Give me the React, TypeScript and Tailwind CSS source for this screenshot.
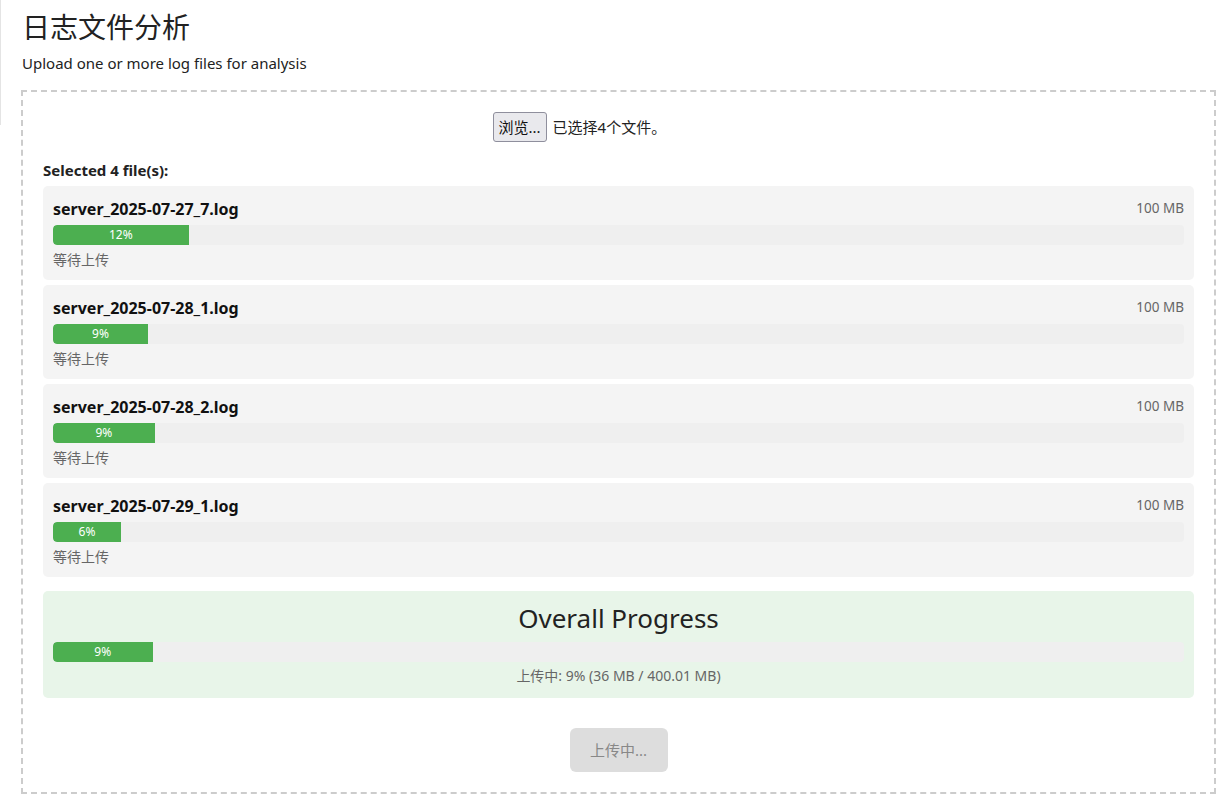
import React from 'react'

const files = [
  { name: 'server_2025-07-27_7.log', size: '100 MB', pct: 12, fill: 12 },
  { name: 'server_2025-07-28_1.log', size: '100 MB', pct: 9, fill: 8.4 },
  { name: 'server_2025-07-28_2.log', size: '100 MB', pct: 9, fill: 9 },
  { name: 'server_2025-07-29_1.log', size: '100 MB', pct: 6, fill: 6 },
]

function Bar({ pct, fill }: { pct: number; fill: number }) {
  return (
    <div className="h-5 w-full bg-[#efefef] rounded-[4px] overflow-hidden">
      <div
        className="h-full bg-[#4caf50] rounded-l-[4px] flex items-center justify-center text-[12px] text-white leading-none"
        style={{ width: `${fill}%` }}
      >
        {pct}%
      </div>
    </div>
  )
}

export default function App() {
  return (
    <main className="relative min-h-screen bg-white pl-[21px] pr-px pt-[10px] text-[#222] font-['Segoe_UI','Noto_Sans','Noto_Sans_CJK_SC',sans-serif]">
      <div className="absolute left-0 top-0 w-px h-[125px] bg-[#e4e4e4]" />
      <h1 className="text-[28px] leading-[34px] font-normal pl-px">日志文件分析</h1>
      <p className="mt-[9px] text-[15px] leading-5 pl-px">Upload one or more log files for analysis</p>

      <div className="mt-[17px] border-2 border-dashed border-[#ccc] p-5">
        {/* file picker */}
        <div className="flex justify-center">
          <div className="w-[252px] flex items-center gap-[6px] text-[15px]">
            <button className="h-[30px] px-[5px] bg-[#e9e9ed] border border-[#8f8f9d] rounded-[3px] text-[#111]">
              浏览...
            </button>
            <span>已选择4个文件。</span>
          </div>
        </div>

        <div className="mt-5 mb-2 text-[15px] leading-4 font-bold">Selected 4 file(s):</div>

        <div className="flex flex-col gap-[5px]">
          {files.map((f) => (
            <div key={f.name} className="bg-[#f4f4f4] rounded-[5px] px-[10px] pt-[12px] pb-[10px]">
              <div className="flex justify-between items-start h-[22px] mb-[5px]">
                <span className="text-[16px] leading-[22px] font-bold text-[#111]">{f.name}</span>
                <span className="text-[13.5px] leading-[20px] text-[#666]">{f.size}</span>
              </div>
              <Bar pct={f.pct} fill={f.fill} />
              <div className="mt-[5px] text-[14px] leading-5 text-[#666]">等待上传</div>
            </div>
          ))}
        </div>

        {/* overall */}
        <div className="mt-[14px] bg-[#e8f5e9] rounded-[5px] px-[10px] pt-3 pb-[13px] text-center">
          <h3 className="text-[26px] leading-[31px] font-normal text-[#222] mb-2">Overall Progress</h3>
          <Bar pct={9} fill={8.8} />
          <div className="mt-[5px] text-[14px] leading-[18px] text-[#666]">上传中: 9% (36 MB / 400.01 MB)</div>
        </div>

        <div className="mt-[30px] flex justify-center">
          <button disabled className="w-[98px] h-[44px] bg-[#ddd] text-[#888] rounded-[6px] text-[15px]">
            上传中...
          </button>
        </div>
      </div>
    </main>
  )
}
